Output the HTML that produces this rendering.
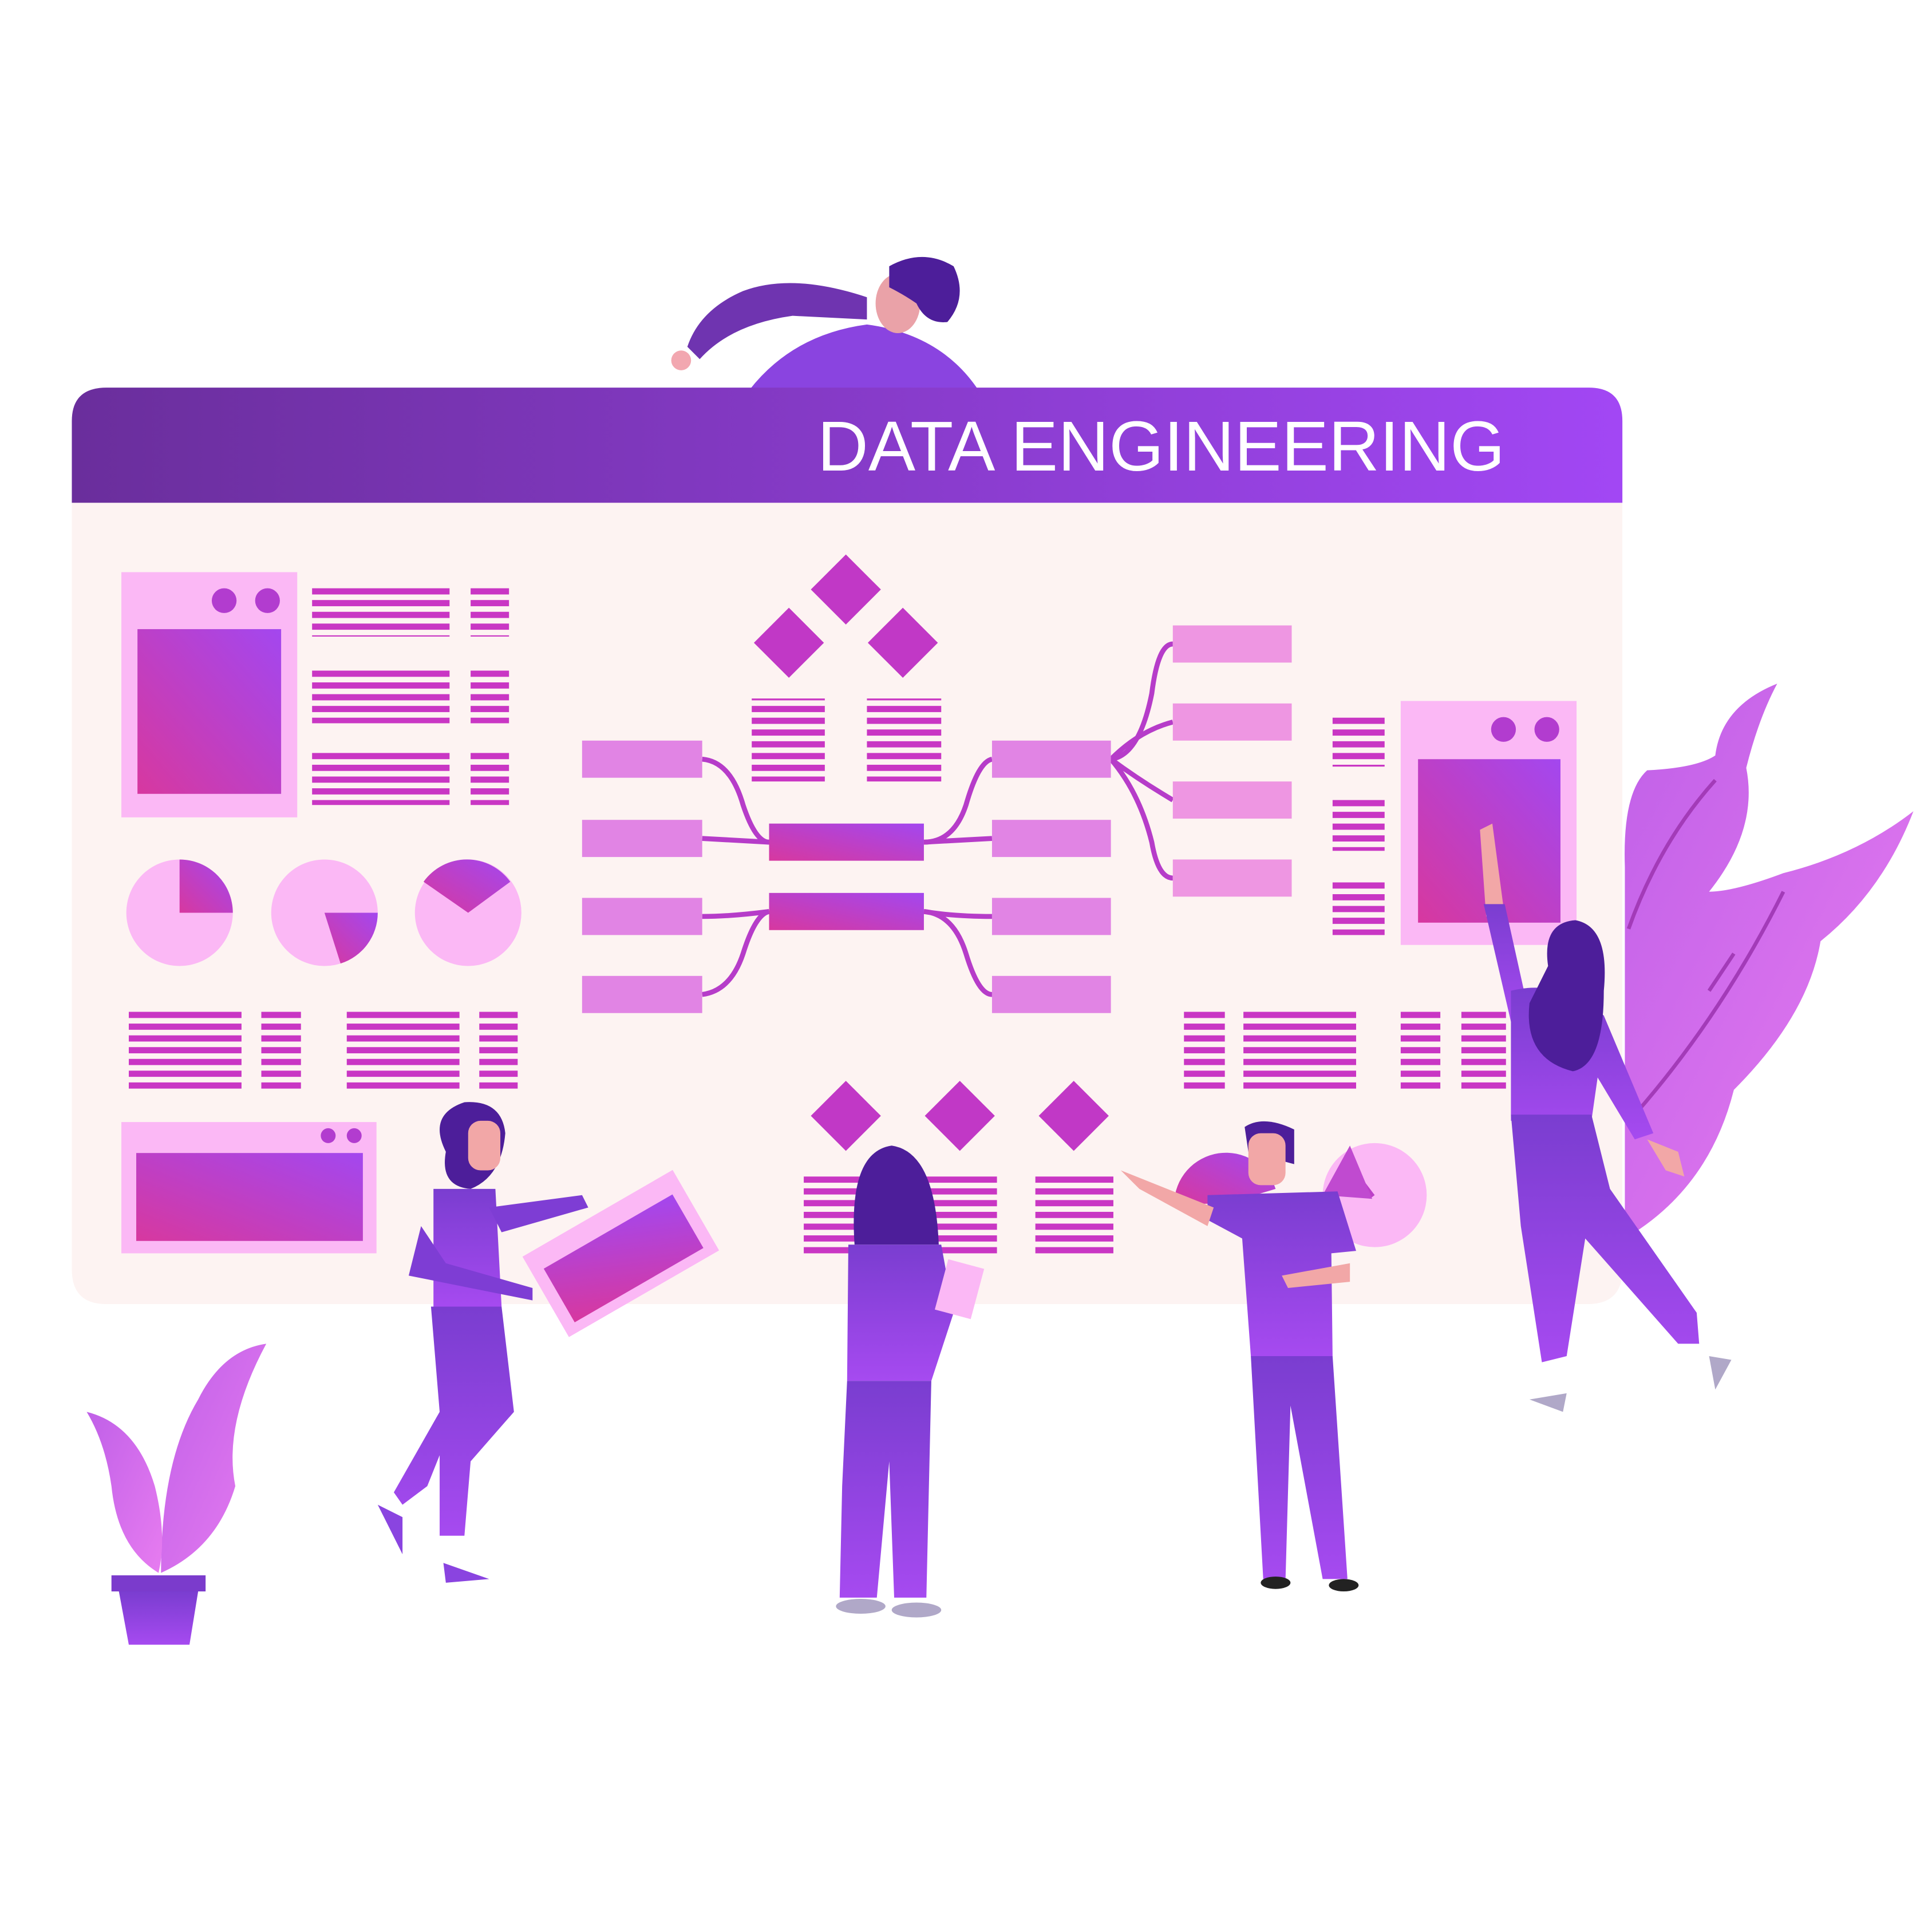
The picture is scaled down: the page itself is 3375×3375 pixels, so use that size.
<!DOCTYPE html>
<html><head><meta charset="utf-8"><style>
html,body{margin:0;padding:0;background:#fff;}
svg{display:block;}
</style></head><body>
<svg width="3375" height="3375" viewBox="0 0 1560 1560" xmlns="http://www.w3.org/2000/svg">
<defs>
<linearGradient id="hdr" x1="0" x2="1" y1="0" y2="0"><stop offset="0" stop-color="#6a2e9c"/><stop offset="1" stop-color="#a247f4"/></linearGradient>
<linearGradient id="blk" x1="0" x2="1" y1="1" y2="0"><stop offset="0" stop-color="#d7389f"/><stop offset="1" stop-color="#a347ef"/></linearGradient>
<linearGradient id="ppl" x1="0" x2="0" y1="0" y2="1"><stop offset="0" stop-color="#7a3dd0"/><stop offset="1" stop-color="#a64af0"/></linearGradient>
<linearGradient id="leaf" x1="0" x2="1" y1="0" y2="1"><stop offset="0" stop-color="#c060e8"/><stop offset="1" stop-color="#e77cf0"/></linearGradient>
<pattern id="ln" patternUnits="userSpaceOnUse" width="10" height="9.5"><rect width="10" height="5" fill="#c936c4"/></pattern>
</defs>
<rect width="1560" height="1560" fill="#fff"/>
<!-- top person -->
<path d="M605 315 Q640 270 700 262 Q760 270 790 315 Z" fill="#8a44e0"/>
<path d="M700 240 Q640 220 600 235 Q565 250 555 280 L565 290 Q590 262 640 255 L700 258 Z" fill="#6f34b0"/>
<circle cx="550" cy="291" r="8" fill="#f2a7b0"/>
<ellipse cx="725" cy="245" rx="18" ry="24" fill="#eaa2a8"/>
<path d="M718 215 Q745 200 770 215 Q782 240 765 260 Q748 262 740 245 Q730 238 718 232 Z" fill="#4d1e9a"/>
<!-- board -->
<path d="M58 340 Q58 313 86 313 L1283 313 Q1310 313 1310 340 L1310 406 L58 406 Z" fill="url(#hdr)"/>
<path d="M58 406 L1310 406 L1310 1025 Q1310 1053 1282 1053 L86 1053 Q58 1053 58 1025 Z" fill="#fdf3f2"/>
<text x="660" y="380" font-family="Liberation Sans, sans-serif" font-size="57" fill="#fff">DATA ENGINEERING</text>
<!-- left window -->
<rect x="98" y="462" width="142" height="198" fill="#fbb8f5"/>
<rect x="111" y="508" width="116" height="133" fill="url(#blk)"/>
<circle cx="181" cy="485" r="10" fill="#b23ccf"/><circle cx="216" cy="485" r="10" fill="#b23ccf"/>
<rect x="252" y="471" width="111" height="43" fill="url(#ln)"/><rect x="380" y="471" width="31" height="43" fill="url(#ln)"/>
<rect x="252" y="541" width="111" height="43" fill="url(#ln)"/><rect x="380" y="541" width="31" height="43" fill="url(#ln)"/>
<rect x="252" y="607" width="111" height="43" fill="url(#ln)"/><rect x="380" y="607" width="31" height="43" fill="url(#ln)"/>
<!-- pies -->
<circle cx="145" cy="737" r="43" fill="#fbb8f5"/><path d="M145 737 L145 694 A43 43 0 0 1 188 737 Z" fill="url(#blk)"/>
<circle cx="262" cy="737" r="43" fill="#fbb8f5"/><path d="M262 737 L305 737 A43 43 0 0 1 275 778 Z" fill="url(#blk)"/>
<circle cx="378" cy="737" r="43" fill="#fbb8f5"/><path d="M378 737 L342 712 A43 43 0 0 1 412 712 Z" fill="url(#blk)"/>
<rect x="104" y="816" width="91" height="66" fill="url(#ln)"/><rect x="211" y="816" width="32" height="66" fill="url(#ln)"/>
<rect x="280" y="816" width="91" height="66" fill="url(#ln)"/><rect x="387" y="816" width="31" height="66" fill="url(#ln)"/>
<!-- bottom left window -->
<rect x="98" y="906" width="206" height="106" fill="#fbb8f5"/>
<rect x="110" y="931" width="183" height="71" fill="url(#blk)"/>
<circle cx="265" cy="917" r="6" fill="#b23ccf"/><circle cx="286" cy="917" r="6" fill="#b23ccf"/>
<!-- center diamonds -->
<g fill="#c138c6">
<rect x="663" y="456" width="40" height="40" transform="rotate(45 683 476)"/>
<rect x="617" y="499" width="40" height="40" transform="rotate(45 637 519)"/>
<rect x="709" y="499" width="40" height="40" transform="rotate(45 729 519)"/>
<rect x="663" y="881" width="40" height="40" transform="rotate(45 683 901)"/>
<rect x="755" y="881" width="40" height="40" transform="rotate(45 775 901)"/>
<rect x="847" y="881" width="40" height="40" transform="rotate(45 867 901)"/>
</g>
<rect x="607" y="564" width="59" height="67" fill="url(#ln)"/><rect x="700" y="564" width="60" height="67" fill="url(#ln)"/>
<rect x="649" y="946" width="156" height="67" fill="url(#ln)"/><rect x="836" y="946" width="63" height="67" fill="url(#ln)"/>
<!-- flow -->
<g fill="none" stroke="#b63cc9" stroke-width="4">
<path d="M567 613 Q590 615 600 650 Q610 680 621 680"/>
<path d="M567 677 L621 680"/>
<path d="M567 740 Q590 740 621 736"/>
<path d="M567 803 Q590 800 600 770 Q610 738 621 736"/>
<path d="M746 680 Q770 680 780 650 Q790 615 801 613"/>
<path d="M746 680 L801 677"/>
<path d="M746 736 Q770 740 801 740"/>
<path d="M746 736 Q770 738 780 770 Q790 803 801 803"/>
<path d="M897 613 Q920 610 930 560 Q935 520 947 520"/>
<path d="M897 613 Q920 590 947 583"/>
<path d="M897 613 Q920 630 947 646"/>
<path d="M897 613 Q920 640 930 680 Q935 709 947 709"/>
</g>
<g fill="#e184e4">
<rect x="470" y="598" width="97" height="30"/><rect x="470" y="662" width="97" height="30"/><rect x="470" y="725" width="97" height="30"/><rect x="470" y="788" width="97" height="30"/>
<rect x="801" y="598" width="96" height="30"/><rect x="801" y="662" width="96" height="30"/><rect x="801" y="725" width="96" height="30"/><rect x="801" y="788" width="96" height="30"/>
</g>
<g fill="#ee96e2">
<rect x="947" y="505" width="96" height="30"/><rect x="947" y="568" width="96" height="30"/><rect x="947" y="631" width="96" height="30"/><rect x="947" y="694" width="96" height="30"/>
</g>
<rect x="621" y="665" width="125" height="30" fill="url(#blk)"/>
<rect x="621" y="721" width="125" height="30" fill="url(#blk)"/>
<rect x="1076" y="576" width="42" height="43" fill="url(#ln)"/><rect x="1076" y="644" width="42" height="43" fill="url(#ln)"/><rect x="1076" y="712" width="42" height="43" fill="url(#ln)"/>
<!-- right window -->
<rect x="1131" y="566" width="142" height="197" fill="#fbb8f5"/>
<rect x="1145" y="613" width="115" height="132" fill="url(#blk)"/>
<circle cx="1214" cy="589" r="10" fill="#b23ccf"/><circle cx="1249" cy="589" r="10" fill="#b23ccf"/>
<rect x="956" y="816" width="33" height="67" fill="url(#ln)"/><rect x="1004" y="816" width="91" height="67" fill="url(#ln)"/>
<rect x="1131" y="816" width="32" height="67" fill="url(#ln)"/><rect x="1180" y="816" width="36" height="67" fill="url(#ln)"/>
<!-- pies near man -->
<circle cx="1110" cy="965" r="42" fill="#fbb8f5"/><path d="M1110 965 L1085 932 L1106 968 Z" fill="url(#blk)"/><path d="M1068 965 L1090 925 L1108 968 Z" fill="#c04ad0"/>
<path d="M948 972 A42 42 0 0 1 1030 960 L990 972 Z" fill="url(#blk)"/>
<!-- leaves right -->
<path d="M1435 552 Q1390 570 1385 610 Q1370 620 1330 622 Q1310 640 1312 700 L1312 1000 Q1380 960 1400 880 Q1460 820 1470 760 Q1520 720 1545 655 Q1500 690 1440 705 Q1400 720 1380 720 Q1420 670 1410 620 Q1420 580 1435 552 Z" fill="url(#leaf)"/>
<g fill="none" stroke="#a33bb8" stroke-width="3"><path d="M1385 630 Q1340 680 1315 750"/><path d="M1440 720 Q1390 820 1320 900"/><path d="M1380 800 L1400 770"/></g>
<!-- left plant -->
<path d="M215 1085 Q180 1090 160 1130 Q130 1180 130 1270 Q175 1250 190 1200 Q180 1150 215 1085 Z" fill="url(#leaf)"/>
<path d="M70 1140 Q110 1150 125 1200 Q135 1240 128 1270 Q95 1250 90 1200 Q85 1165 70 1140 Z" fill="url(#leaf)"/>
<rect x="90" y="1272" width="76" height="13" fill="#7b3bcc"/>
<path d="M96 1285 L160 1285 L153 1328 L104 1328 Z" fill="url(#ppl)"/>
<!-- person 1 (left, window) -->
<path d="M360 930 Q345 900 375 890 Q405 888 408 915 Q405 950 380 960 Q355 958 360 930 Z" fill="#4d1e9a"/>
<rect x="378" y="905" width="26" height="40" rx="10" fill="#f2a7a7"/>
<path d="M350 960 L400 960 L405 1055 L350 1055 Z" fill="url(#ppl)"/>
<path d="M340 990 L330 1030 L430 1050 L430 1040 L360 1020 Z" fill="#7e3dd4"/>
<path d="M395 975 L470 965 L475 975 L405 995 Z" fill="#7e3dd4"/>
<path d="M348 1055 L405 1055 L415 1140 L380 1180 L375 1240 L355 1240 L355 1175 L345 1200 L325 1215 L318 1205 L355 1140 Z" fill="url(#ppl)"/>
<path d="M305 1215 L325 1225 L325 1255 Z" fill="#8a44e0"/><path d="M358 1262 L395 1275 L360 1278 Z" fill="#8a44e0"/>
<g transform="rotate(-30 500 1010)"><rect x="430" y="975" width="140" height="75" fill="#fbb8f5"/><rect x="440" y="992" width="120" height="50" fill="url(#blk)"/></g>
<!-- person 2 (center) -->
<path d="M690 1005 Q685 930 720 925 Q755 930 758 1005 Z" fill="#4d1e9a"/>
<path d="M685 1005 L760 1005 L770 1060 L752 1115 L684 1115 Z" fill="url(#ppl)"/>
<path d="M684 1115 L752 1115 L748 1290 L722 1290 L718 1180 L708 1290 L678 1290 L680 1200 Z" fill="url(#ppl)"/>
<ellipse cx="695" cy="1297" rx="20" ry="6" fill="#b0a8c8"/><ellipse cx="740" cy="1300" rx="20" ry="6" fill="#b0a8c8"/>
<rect x="760" y="1020" width="30" height="42" fill="#fbb8f5" transform="rotate(15 775 1040)"/>
<!-- person 3 (man) -->
<path d="M1005 910 Q1020 900 1045 912 L1045 940 L1008 930 Z" fill="#4d1e9a"/>
<rect x="1008" y="915" width="30" height="42" rx="10" fill="#f2a7a7"/>
<path d="M975 965 L1080 962 L1095 1010 L1075 1012 L1076 1095 L1010 1095 L1003 1000 L975 985 Z" fill="url(#ppl)"/>
<path d="M905 945 L980 975 L975 990 L920 960 Z" fill="#f2a7a7"/>
<path d="M1035 1030 L1090 1020 L1090 1035 L1040 1040 Z" fill="#f2a7a7"/>
<path d="M1010 1095 L1076 1095 L1088 1275 L1068 1275 L1042 1135 L1038 1275 L1020 1275 Z" fill="url(#ppl)"/>
<ellipse cx="1030" cy="1278" rx="12" ry="5" fill="#222"/><ellipse cx="1085" cy="1280" rx="12" ry="5" fill="#222"/>
<!-- person 4 (right) -->
<path d="M1195 670 L1205 665 L1215 740 L1200 740 Z" fill="#f2a7a7"/>
<path d="M1198 730 L1215 730 L1235 820 L1220 825 Z" fill="url(#ppl)"/>
<path d="M1220 800 Q1260 790 1295 820 L1335 915 L1320 920 L1290 870 L1285 905 L1220 905 Z" fill="url(#ppl)"/>
<path d="M1250 780 Q1245 745 1272 743 Q1300 748 1295 800 Q1295 860 1270 865 Q1230 855 1235 810 Z" fill="#4d1e9a"/>
<path d="M1220 900 L1285 900 L1300 960 L1370 1060 L1372 1085 L1355 1085 L1280 1000 L1265 1095 L1245 1100 L1228 990 Z" fill="url(#ppl)"/>
<path d="M1330 920 L1355 930 L1360 950 L1345 945 Z" fill="#f2a7a7"/>
<path d="M1235 1130 L1265 1125 L1262 1140 Z" fill="#b0a8c8"/><path d="M1380 1095 L1398 1098 L1385 1122 Z" fill="#b0a8c8"/>
</svg>
</body></html>
